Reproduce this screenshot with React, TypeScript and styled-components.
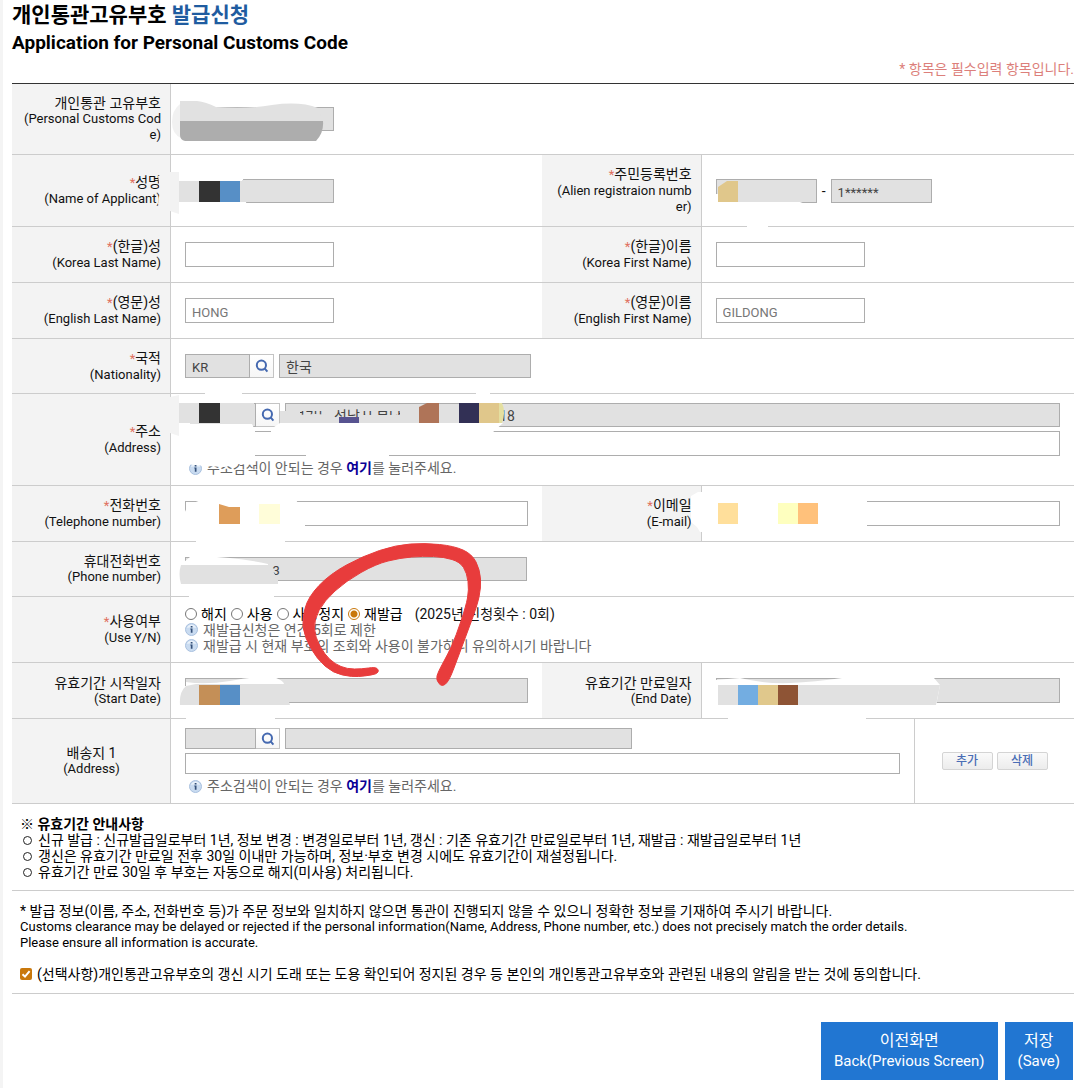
import React from "react";
import styled, { createGlobalStyle } from "styled-components";

const GlobalStyle = createGlobalStyle`
  * { box-sizing: border-box; }
  body {
    margin: 0;
    background: #fff;
    color: #111;
    font: 14px/16px Roboto, "Noto Sans CJK KR", sans-serif;
  }
  input, button { font: inherit; }
`;

const Page = styled.main`
  position: relative;
  min-height: 1088px;
  padding: 2px 3px 8px 9px;
  border-left: 3px solid #f4f4f4;
`;

const Title = styled.h1`
  margin: 0;
  color: #000;
  font-size: 21px;
  line-height: 27px;
  font-weight: 600;
`;

const TitleAccent = styled.span`
  color: #1f5ca0;
`;

const TitleEnglish = styled.span`
  display: block;
  font-size: 19px;
  font-weight: 700;
`;

const English = styled.span`
  display: block;
  font-size: 13px;
`;

const RequiredNote = styled.p`
  margin: 5px 0 6px;
  color: #dc7f7b;
  text-align: right;
`;

const FormTable = styled.table`
  width: 100%;
  table-layout: fixed;
  border-collapse: separate;
  border-spacing: 0;
  border-top: 1px solid #333;
`;

const Col = styled.col<{ $w?: string }>`
  width: ${(p) => p.$w ?? "auto"};
`;

const Row = styled.tr<{ $h: number }>`
  height: ${(p) => p.$h}px;
`;

const LabelCell = styled.th<{ $center?: boolean }>`
  padding: 0 9px 0 10px;
  border-right: 1px solid #ccc;
  border-bottom: 1px solid #ccc;
  background: #f3f3f3;
  font-weight: 400;
  text-align: ${(p) => (p.$center ? "center" : "right")};
  word-break: break-all;
`;

const FieldCell = styled.td<{ $divided?: boolean }>`
  padding: 0 14px;
  border-bottom: 1px solid #ccc;
  border-left: ${(p) => (p.$divided ? "1px solid #ccc" : "0")};
`;

const Star = styled.span`
  color: #e0705f;
  font-size: 13px;
`;

const Line = styled.div`
  display: flex;
  align-items: center;
`;

const Stack = styled.div`
  display: flex;
  flex-direction: column;
  gap: 4px;
`;

const Field = styled.input<{ $w?: string; $h?: number; $grow?: boolean }>`
  display: block;
  width: ${(p) => p.$w ?? "100%"};
  height: ${(p) => p.$h ?? 25}px;
  flex: ${(p) => (p.$grow ? "1 1 0" : "0 1 auto")};
  min-width: 0;
  padding: 3px 6px 0;
  border: 1px solid #adadad;
  border-radius: 0;
  background: #fff;
  color: #444;
  font-size: 13px;
  outline: 0;
  &:read-only { background: #e1e1e1; }
  &::placeholder { color: #777; opacity: 1; }
`;

const KoreanField = styled(Field)`
  padding-top: 0;
  font-size: 14px;
`;

const Dash = styled.span`
  width: 14px;
  text-align: center;
`;

const SearchButton = styled.button<{ $h?: number }>`
  display: flex;
  align-items: center;
  justify-content: center;
  width: 24px;
  height: ${(p) => p.$h ?? 24}px;
  margin-right: 5px;
  padding: 0;
  border: 1px solid #c4c4c4;
  border-left: 0;
  background: linear-gradient(#fff, #f6f6f6);
`;

const Hint = styled.p<{ $indent?: boolean }>`
  display: flex;
  align-items: center;
  gap: 5px;
  margin: 0;
  padding-left: ${(p) => (p.$indent ? 4 : 0)}px;
  color: #666;
`;

const HintLink = styled.a`
  color: #0a0096;
  font-weight: 700;
  text-decoration: none;
`;

const Choice = styled.label`
  display: flex;
  align-items: center;
  gap: 4px;
  margin-right: 4px;
  color: #000;
`;

const Radio = styled.input`
  appearance: none;
  width: 12px;
  height: 12px;
  margin: 0;
  border: 1px solid #777;
  border-radius: 50%;
  background: #fff;
  &:checked {
    border-color: #c9780c;
    background: radial-gradient(circle, #c9780c 0 3px, #fff 4px);
  }
`;

const Count = styled.span`
  margin-left: 8px;
`;

const SmallActions = styled.div`
  display: flex;
  justify-content: center;
  gap: 4px;
`;

const SmallButton = styled.button`
  width: 51px;
  height: 18px;
  padding: 0;
  border: 1px solid #d4d4d4;
  border-radius: 2px;
  background: linear-gradient(#fafafa, #ececec);
  color: #4a6db5;
  font-size: 12px;
  font-weight: 500;
  line-height: 16px;
`;

const Notice = styled.section`
  padding: 12px 8px 10px;
  border-bottom: 1px solid #ccc;
  color: #000;
`;

const NoticeTitle = styled.h2`
  margin: 0;
  font-size: 14px;
  line-height: 16px;
  font-weight: 700;
`;

const NoticeList = styled.ul`
  margin: 0;
  padding: 0;
  list-style: none;
`;

const NoticeItem = styled.li`
  display: flex;
  align-items: center;
  gap: 6px;
  padding-left: 3px;
  &::before {
    content: "";
    width: 7px;
    height: 7px;
    border: 1px solid #222;
    border-radius: 50%;
  }
`;

const Paragraph = styled.p`
  margin: 0;
`;

const Consent = styled.label`
  display: flex;
  align-items: center;
  gap: 5px;
  margin: 15px 0 1px;
`;

const CheckWrap = styled.span`
  display: grid;
  width: 12px;
  height: 12px;
  & > * { grid-area: 1 / 1; }
`;

const Check = styled.input`
  appearance: none;
  width: 12px;
  height: 12px;
  margin: 0;
  border-radius: 2px;
  background: #c9780c;
`;

const Actions = styled.div`
  display: flex;
  justify-content: flex-end;
  gap: 7px;
  padding: 28px 1px 0;
`;

const ActionButton = styled.button`
  padding: 8px 13px;
  border: 0;
  background: #2176d2;
  color: #fff;
  font-size: 16px;
  line-height: 21px;
`;

const ActionEnglish = styled.span`
  display: block;
  font-size: 15px;
`;

const MarkLayer = styled.svg`
  position: absolute;
  top: 0;
  left: -3px;
  pointer-events: none;
`;

const SearchIcon = () => (
  <svg width="14" height="14" viewBox="0 0 14 14" fill="none" stroke="#4569b0" strokeWidth="2" aria-hidden="true">
    <circle cx="6.4" cy="6.2" r="4.6" />
    <path d="M9.4 9.2 L12.4 12.6" />
  </svg>
);

const InfoIcon = () => (
  <svg width="13" height="13" viewBox="0 0 13 13" aria-hidden="true">
    <circle cx="6.5" cy="6.5" r="6" fill="#c9dbf0" stroke="#a9c0de" />
    <path d="M2 5 A4.8 4.8 0 0 1 11 5 Q6.5 3.4 2 5Z" fill="#e9f1fa" />
    <path d="M5.7 3 h1.8 v1.5 h-1.8z M5.3 5.6 h2.2 v4.2 h-1.7 v-3.2 h-.5z" fill="#345079" />
  </svg>
);

type LabelProps = { ko: string; en: string; required?: boolean; center?: boolean };

const Label = ({ ko, en, required, center }: LabelProps) => (
  <LabelCell scope="row" $center={center}>
    {required && <Star>*</Star>}
    {ko}
    <English>{en}</English>
  </LabelCell>
);

const AddressHint = () => (
  <Hint $indent>
    <InfoIcon />
    <span>
      주소검색이 안되는 경우 <HintLink href="#address">여기</HintLink>를 눌러주세요.
    </span>
  </Hint>
);

type Point = [number, number];

/* Closed curve through the midpoints of a hand-drawn outline. */
const smooth = (pts: Point[]) => {
  const mid = (a: Point, b: Point) => `${(a[0] + b[0]) / 2} ${(a[1] + b[1]) / 2}`;
  const last = pts[pts.length - 1];
  return (
    `M${mid(last, pts[0])}` +
    pts.map((p, i) => `Q${p[0]} ${p[1]} ${mid(p, pts[(i + 1) % pts.length])}`).join("") +
    "Z"
  );
};

const penStroke: Point[] = [
  [377, 674], [365, 676], [352, 677], [333, 673], [317, 659], [305, 638], [302, 620], [308, 597],
  [330, 574], [363, 556], [396, 545], [425, 543], [454, 546], [472, 554], [480, 570], [481, 588],
  [477, 606], [467, 633], [457, 660], [449, 681], [442, 687], [436, 680], [438, 672], [448, 654],
  [456, 636], [466, 606], [469, 590], [467, 573], [460, 562], [444, 557], [423, 556], [400, 558],
  [376, 564], [346, 581], [324, 601], [314, 620], [315, 637], [325, 655], [335, 664], [347, 669],
  [362, 669], [375, 667], [379, 670],
];

const shades: [string, string][] = [
  // customs code
  ["#f1f1f1", "M180 104 Q172 110 172 122 Q172 134 181 138Z"],
  ["#e1e1e1", "M180 101 H197 Q206 102 216 107 Q250 109 272 105 Q300 101 318 108 L323 122 H180Z"],
  ["#adadad", "M180 121 H323 Q324 133 316 141 H185 Q180 140 180 135Z"],
  // applicant name
  ["#f3f3f3", "M158 176 H170 V208 H160 L158 204 L160 190Z"],
  ["#fff", "M179 172 H230 L243 179 L246 202 L247 206 L179 215Z"],
  ["#f2f2f2", "M170 172 H179 V214 L170 211Z"],
  ["#e1e1e1", "M179 181 H242 V180 H247 V202 H179Z"],
  ["#333", "M199 181 H220 V202 H199Z"],
  ["#578fc6", "M220 181 H240 V202 H220Z"],
  // registration number
  ["#fff", "M715 194 H718 V202 H800 L808 205 H715Z M747 226 H768 V227 H747Z"],
  ["#e0c78b", "M718 187 L727 181 H738 V202 H718Z"],
  // address
  ["#fff", "M205 393 H242 V394 H205Z M476 393 H490 V394 H476Z"],
  ["#f3f3f3", "M170 397 L179 395 V436 L170 433Z"],
  ["#fff", "M179 402 H190 V424 H252 L255 430 V465 L238 464 L225 467 L205 466 L185 464 L179 450Z M280 423 L271 429 V433 H492 L503 423Z M306 455 H389 V458 H306Z"],
  ["#e1e1e1", "M179 403 H254 V423 H179Z M280 411 H291 V423 H280Z M290 405 H300 V423 H290Z M300 405 H333 V411 H300Z M298 415 L315 414 L333 415 V423 H298Z M333 418 H503 V423 H333Z M360 405 H400 V411 H360Z M361 415 H420 V423 H361Z M400 405 H419 V423 H400Z"],
  ["#333", "M199 403 H220 V423 H199Z"],
  ["#575390", "M339 417 H359 V423 H339Z"],
  ["#af7458", "M419 407 L427 403 H439 V423 H419Z"],
  ["#323055", "M459 403 H479 V423 H459Z"],
  ["#e4dfa0", "M498 403 H502 Q506 412 502 423 H498Z"],
  ["#e0c78b", "M479 403 H499 V423 H479Z"],
  // telephone and e-mail
  ["#fff", "M201 500 H296 L300 506 L305 520 V528 H184 V514 L188 505Z M196 541 H285 V542 H196Z"],
  ["#de9d5a", "M219 504 L229 507 L240 507 V524 H219Z"],
  ["#fffdd9", "M259 504 H280 V524 H259Z"],
  ["#fff", "M691 496 L698 492 H850 L867 500 V528 L700 532 L697 527 L691 522Z"],
  ["#ffdf9b", "M718 503 H738 V524 H718Z"],
  ["#feffbf", "M778 503 H798 V524 H778Z"],
  ["#ffc17b", "M798 503 H818 V524 H798Z"],
  // phone
  ["#fff", "M184 562 L190 557 Q228 555 268 564 V567 H184Z M184 580 H278 V586 H184Z M189 596 H274 V597 H189Z"],
  ["#e1e1e1", "M181 565 H268 L272 569 L274 573 L278 580 V584 H181 Q178 574 181 565Z"],
  // start date
  ["#fff", "M186 682 Q205 685 230 681 Q250 676 274 677 Q284 681 284 684 L186 688Z M184 686 H190 V705 H184Z M186 718 H275 V719 H186Z"],
  ["#e1e1e1", "M186 686 L196 684 H282 Q286 692 290 705 H180 Q179 692 186 686Z"],
  ["#c48f57", "M199 685 H220 V705 H199Z"],
  ["#578fc6", "M220 685 H240 V705 H220Z"],
  // end date
  ["#fff", "M715 680 L740 678 Q765 684 790 683 Q815 682 842 678 H934 L940 685 L936 706 H715Z M728 718 H866 V719 H728Z"],
  ["#e1e1e1", "M718 685 H940 L936 705 H718Z"],
  ["#73ade1", "M738 685 H758 V705 H738Z"],
  ["#e0c88c", "M758 685 H778 V705 H758Z"],
  ["#8e5435", "M778 685 H798 V705 H778Z"],
];

const Marks = () => (
  <MarkLayer width="1077" height="800" viewBox="0 0 1077 800" aria-hidden="true">
    {shades.map(([fill, d], i) => (
      <path key={i} fill={fill} d={d} />
    ))}
    <path fill="#e83c3c" stroke="#e83c3c" strokeWidth="1" d={smooth(penStroke)} />
  </MarkLayer>
);

const uses = ["해지", "사용", "사용정지", "재발급"];

export default function App() {
  return (
    <Page>
      <GlobalStyle />
      <Title>
        개인통관고유부호 <TitleAccent>발급신청</TitleAccent>
        <TitleEnglish>Application for Personal Customs Code</TitleEnglish>
      </Title>
      <RequiredNote>* 항목은 필수입력 항목입니다.</RequiredNote>

      <FormTable>
        <colgroup>
          <Col $w="159px" />
          <Col />
          <Col $w="160px" />
          <Col $w="20%" />
          <Col $w="160px" />
        </colgroup>
        <tbody>
          <Row $h={71}>
            <Label ko="개인통관 고유부호" en="(Personal Customs Code)" />
            <FieldCell colSpan={4}>
              <Field aria-label="Personal Customs Code" readOnly $w="149px" $h={24} />
            </FieldCell>
          </Row>
          <Row $h={72}>
            <Label required ko="성명" en="(Name of Applicant)" />
            <FieldCell>
              <Field aria-label="Name of Applicant" readOnly $w="149px" $h={24} />
            </FieldCell>
            <Label required ko="주민등록번호" en="(Alien registraion number)" />
            <FieldCell colSpan={2}>
              <Line>
                <Field aria-label="Registration number, first part" readOnly $w="101px" $h={24} />
                <Dash>-</Dash>
                <Field aria-label="Registration number, second part" readOnly defaultValue="1******" $w="101px" $h={24} />
              </Line>
            </FieldCell>
          </Row>
          <Row $h={56}>
            <Label required ko="(한글)성" en="(Korea Last Name)" />
            <FieldCell>
              <Field aria-label="Korea Last Name" $w="149px" />
            </FieldCell>
            <Label required ko="(한글)이름" en="(Korea First Name)" />
            <FieldCell colSpan={2}>
              <Field aria-label="Korea First Name" $w="149px" />
            </FieldCell>
          </Row>
          <Row $h={56}>
            <Label required ko="(영문)성" en="(English Last Name)" />
            <FieldCell>
              <Field aria-label="English Last Name" placeholder="HONG" $w="149px" />
            </FieldCell>
            <Label required ko="(영문)이름" en="(English First Name)" />
            <FieldCell colSpan={2}>
              <Field aria-label="English First Name" placeholder="GILDONG" $w="149px" />
            </FieldCell>
          </Row>
          <Row $h={55}>
            <Label required ko="국적" en="(Nationality)" />
            <FieldCell colSpan={4}>
              <Line>
                <Field aria-label="Nationality code" readOnly defaultValue="KR" $w="65px" $h={24} />
                <SearchButton type="button" aria-label="국적 검색"><SearchIcon /></SearchButton>
                <KoreanField aria-label="Nationality" readOnly defaultValue="한국" $w="252px" $h={24} />
              </Line>
            </FieldCell>
          </Row>
          <Row $h={92}>
            <Label required ko="주소" en="(Address)" />
            <FieldCell colSpan={4}>
              <Stack>
                <Line>
                  <Field aria-label="Postal code" readOnly $w="71px" $h={24} />
                  <SearchButton type="button" aria-label="주소 검색"><SearchIcon /></SearchButton>
                  <KoreanField aria-label="Address" readOnly defaultValue={"경기도 성남시 분당" + " ".repeat(28) + "18"} $grow $h={24} />
                </Line>
                <Field aria-label="Address detail" />
                <AddressHint />
              </Stack>
            </FieldCell>
          </Row>
          <Row $h={56}>
            <Label required ko="전화번호" en="(Telephone number)" />
            <FieldCell>
              <Field aria-label="Telephone number" />
            </FieldCell>
            <Label required ko="이메일" en="(E-mail)" />
            <FieldCell colSpan={2}>
              <Field aria-label="E-mail" />
            </FieldCell>
          </Row>
          <Row $h={55}>
            <Label ko="휴대전화번호" en="(Phone number)" />
            <FieldCell colSpan={4}>
              <Field aria-label="Phone number" readOnly defaultValue={" ".repeat(25) + "3"} $w="342px" $h={24} />
            </FieldCell>
          </Row>
          <Row $h={66}>
            <Label required ko="사용여부" en="(Use Y/N)" />
            <FieldCell colSpan={4}>
              <Line>
                {uses.map((use) => (
                  <Choice key={use}>
                    <Radio type="radio" name="use" defaultChecked={use === "재발급"} />
                    {use}
                  </Choice>
                ))}
                <Count>(2025년 신청횟수 : 0회)</Count>
              </Line>
              <Hint><InfoIcon />재발급신청은 연간 5회로 제한</Hint>
              <Hint><InfoIcon />재발급 시 현재 부호의 조회와 사용이 불가하니 유의하시기 바랍니다</Hint>
            </FieldCell>
          </Row>
          <Row $h={56}>
            <Label ko="유효기간 시작일자" en="(Start Date)" />
            <FieldCell>
              <Field aria-label="Start Date" readOnly />
            </FieldCell>
            <Label ko="유효기간 만료일자" en="(End Date)" />
            <FieldCell colSpan={2}>
              <Field aria-label="End Date" readOnly />
            </FieldCell>
          </Row>
          <Row $h={85}>
            <Label center ko="배송지 1" en="(Address)" />
            <FieldCell colSpan={3}>
              <Stack>
                <Line>
                  <Field aria-label="Delivery postal code" readOnly $w="71px" $h={21} />
                  <SearchButton type="button" aria-label="배송지 검색" $h={21}><SearchIcon /></SearchButton>
                  <Field aria-label="Delivery address" readOnly $w="347px" $h={21} />
                </Line>
                <Field aria-label="Delivery address detail" $h={21} />
                <AddressHint />
              </Stack>
            </FieldCell>
            <FieldCell $divided>
              <SmallActions>
                <SmallButton type="button">추가</SmallButton>
                <SmallButton type="button">삭제</SmallButton>
              </SmallActions>
            </FieldCell>
          </Row>
        </tbody>
      </FormTable>

      <Notice>
        <NoticeTitle>※ 유효기간 안내사항</NoticeTitle>
        <NoticeList>
          <NoticeItem>신규 발급 : 신규발급일로부터 1년, 정보 변경 : 변경일로부터 1년, 갱신 : 기존 유효기간 만료일로부터 1년, 재발급 : 재발급일로부터 1년</NoticeItem>
          <NoticeItem>갱신은 유효기간 만료일 전후 30일 이내만 가능하며, 정보·부호 변경 시에도 유효기간이 재설정됩니다.</NoticeItem>
          <NoticeItem>유효기간 만료 30일 후 부호는 자동으로 해지(미사용) 처리됩니다.</NoticeItem>
        </NoticeList>
      </Notice>

      <Notice>
        <Paragraph>* 발급 정보(이름, 주소, 전화번호 등)가 주문 정보와 일치하지 않으면 통관이 진행되지 않을 수 있으니 정확한 정보를 기재하여 주시기 바랍니다.</Paragraph>
        <Paragraph>
          <English>Customs clearance may be delayed or rejected if the personal information(Name, Address, Phone number, etc.) does not precisely match the order details.</English>
          <English>Please ensure all information is accurate.</English>
        </Paragraph>
        <Consent>
          <CheckWrap>
            <Check type="checkbox" defaultChecked />
            <svg width="12" height="12" viewBox="0 0 12 12" fill="none" stroke="#fff" strokeWidth="2" aria-hidden="true">
              <path d="M2.5 6.2 L5 8.6 L9.6 3.2" />
            </svg>
          </CheckWrap>
          (선택사항)개인통관고유부호의 갱신 시기 도래 또는 도용 확인되어 정지된 경우 등 본인의 개인통관고유부호와 관련된 내용의 알림을 받는 것에 동의합니다.
        </Consent>
      </Notice>

      <Actions>
        <ActionButton type="button">이전화면<ActionEnglish>Back(Previous Screen)</ActionEnglish></ActionButton>
        <ActionButton type="button">저장<ActionEnglish>(Save)</ActionEnglish></ActionButton>
      </Actions>
      <Marks />
    </Page>
  );
}
